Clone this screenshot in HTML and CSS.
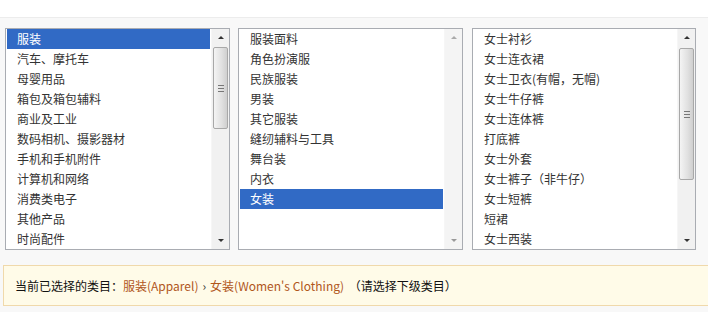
FILE: index.html
```html
<!DOCTYPE html>
<html lang="zh-CN">

<head>
   <meta charset="UTF-8">
   <meta name="viewport" content="width=device-width, initial-scale=1.0">
   <title>选择类目</title>
   <link rel="stylesheet" href="styles.css">
</head>

<body>
   <div class="cabecera"></div>

   <!-- Las tres listas de categorías -->
   <div class="listas">
      <div class="caja">
         <ul class="lista">
            <li class="activo">服装</li>
            <li>汽车、摩托车</li>
            <li>母婴用品</li>
            <li>箱包及箱包辅料</li>
            <li>商业及工业</li>
            <li>数码相机、摄影器材</li>
            <li>手机和手机附件</li>
            <li>计算机和网络</li>
            <li>消费类电子</li>
            <li>其他产品</li>
            <li>时尚配件</li>
         </ul>
         <div class="barra">
            <span class="flecha arriba"></span>
            <div class="pista"><div class="pulgar pulgar-1"><span class="agarre"></span></div></div>
            <span class="flecha abajo"></span>
         </div>
      </div>

      <div class="caja">
         <ul class="lista">
            <li>服装面料</li>
            <li>角色扮演服</li>
            <li>民族服装</li>
            <li>男装</li>
            <li>其它服装</li>
            <li>缝纫辅料与工具</li>
            <li>舞台装</li>
            <li>内衣</li>
            <li class="activo">女装</li>
         </ul>
         <div class="barra inactiva">
            <span class="flecha arriba"></span>
            <div class="pista"></div>
            <span class="flecha abajo"></span>
         </div>
      </div>

      <div class="caja">
         <ul class="lista">
            <li>女士衬衫</li>
            <li>女士连衣裙</li>
            <li>女士卫衣(有帽，无帽)</li>
            <li>女士牛仔裤</li>
            <li>女士连体裤</li>
            <li>打底裤</li>
            <li>女士外套</li>
            <li>女士裤子（非牛仔）</li>
            <li>女士短裤</li>
            <li>短裙</li>
            <li>女士西装</li>
         </ul>
         <div class="barra">
            <span class="flecha arriba"></span>
            <div class="pista"><div class="pulgar pulgar-3"><span class="agarre"></span></div></div>
            <span class="flecha abajo"></span>
         </div>
      </div>
   </div>

   <!-- Categoría elegida -->
   <div class="actual">
      当前已选择的类目：<span class="ruta">服装(Apparel)</span><span class="sep">›</span><span class="ruta">女装(Women's Clothing)</span>
      <span class="nota">（请选择下级类目）</span>
   </div>
</body>

</html>
```

FILE: styles.css
```css
/* Estilos generales */
body {
   margin: 0;
   background: #f8f8f8;
   font-family: "Noto Sans CJK SC", "DejaVu Sans", sans-serif;
   font-size: 12px;
   color: #333;
   overflow: hidden;
}

.cabecera {
   height: 17px;
   background: #fff;
   border-bottom: 1px solid #ececec;
}

/* Contenedor de las listas */
.listas {
   display: grid;
   grid-template-columns: 225px 225px 225px;
   column-gap: 8px;
   padding: 10px 0 0 5px;
}

.listas .caja:nth-child(3) {
   margin-left: 1px;
}

.caja {
   display: flex;
   height: 220px;
   background: #fff;
   border: 1px solid #a9acb2;
}

.lista {
   flex: 1;
   list-style: none;
   margin: 0;
   padding: 0 1px;
   overflow: hidden;
}

.lista li {
   height: 20px;
   line-height: 20px;
   padding-left: 10px;
   white-space: nowrap;
}

.lista li.activo {
   background: #316ac5;
   color: #fff;
}

/* Barra de desplazamiento dibujada */
.barra {
   width: 17px;
   display: flex;
   flex-direction: column;
   background: #f1f1f1;
   border-left: 1px solid #f6f6f6;
}

.flecha {
   height: 17px;
   display: flex;
   align-items: center;
   justify-content: center;
}

.flecha::after {
   content: "";
   border-left: 3px solid transparent;
   border-right: 3px solid transparent;
}

.arriba::after {
   border-bottom: 3px solid #333;
}

.abajo::after {
   border-top: 3px solid #333;
}

.pista {
   flex: 1;
   position: relative;
}

.pulgar {
   position: absolute;
   left: 1px;
   right: 1px;
   border: 1px solid #a8a8a8;
   border-radius: 2px;
   background: linear-gradient(to right, #f4f4f4, #e0e0e0 60%, #cfcfcf);
   display: flex;
   align-items: center;
   justify-content: center;
}

.pulgar-1 {
   top: 1px;
   height: 80px;
}

.pulgar-3 {
   top: 2px;
   height: 130px;
}

.agarre {
   width: 6px;
   height: 5px;
   border-top: 1px solid #777;
   border-bottom: 1px solid #777;
   position: relative;
}

.agarre::after {
   content: "";
   position: absolute;
   left: 0;
   right: 0;
   top: 2px;
   border-top: 1px solid #777;
}

.inactiva {
   background: #f4f4f4;
}

.inactiva .arriba::after {
   border-bottom-color: #aaa;
}

.inactiva .abajo::after {
   border-top-color: #999;
}

/* Barra inferior con la categoría actual */
.actual {
   margin: 15px 0 0 3px;
   height: 39px;
   line-height: 39px;
   padding-left: 11px;
   background: #fffbe8;
   border: 1px solid #f0d9ab;
   border-right: none;
   color: #111;
   white-space: nowrap;
}

.ruta {
   color: #b0561c;
}

.sep {
   margin: 0 4px;
   color: #333;
}

.nota {
   margin-left: 2px;
}
```
